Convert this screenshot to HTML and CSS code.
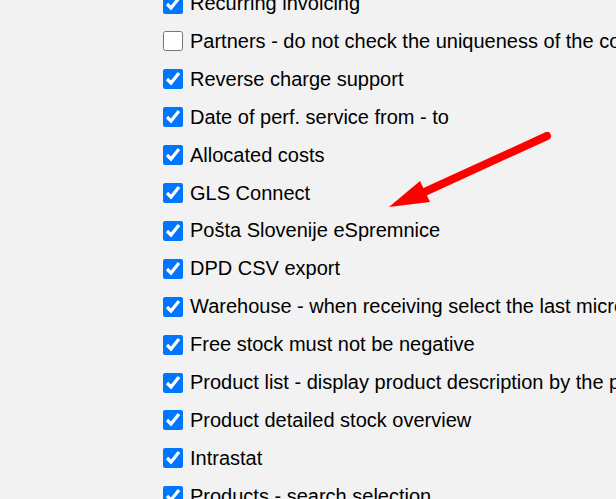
FILE: index.html
```html
<!DOCTYPE html>
<html>
<head>
<meta charset="utf-8">
<link rel="stylesheet" href="styles.css">
</head>
<body>
<div class="page">
  <ul class="options">
    <li class="opt"><input type="checkbox" checked><span>Recurring invoicing</span></li>
    <li class="opt"><input type="checkbox"><span>Partners - do not check the uniqueness of the company registration number</span></li>
    <li class="opt"><input type="checkbox" checked><span>Reverse charge support</span></li>
    <li class="opt"><input type="checkbox" checked><span>Date of perf. service from - to</span></li>
    <li class="opt"><input type="checkbox" checked><span>Allocated costs</span></li>
    <li class="opt"><input type="checkbox" checked><span>GLS Connect</span></li>
    <li class="opt"><input type="checkbox" checked><span>Pošta Slovenije eSpremnice</span></li>
    <li class="opt"><input type="checkbox" checked><span>DPD CSV export</span></li>
    <li class="opt"><input type="checkbox" checked><span>Warehouse - when receiving select the last micro location</span></li>
    <li class="opt"><input type="checkbox" checked><span>Free stock must not be negative</span></li>
    <li class="opt"><input type="checkbox" checked><span>Product list - display product description by the product name</span></li>
    <li class="opt"><input type="checkbox" checked><span>Product detailed stock overview</span></li>
    <li class="opt"><input type="checkbox" checked><span>Intrastat</span></li>
    <li class="opt"><input type="checkbox" checked><span>Products - search selection</span></li>
  </ul>
  <svg class="arrow" width="616" height="499" viewBox="0 0 616 499" aria-hidden="true">
    <line x1="547" y1="136" x2="418" y2="195" stroke="#ff0000" stroke-width="8" stroke-linecap="round"/>
    <polygon points="389,207 420,181 430,202" fill="#ff0000"/>
  </svg>
</div>
</body>
</html>
```

FILE: styles.css
```css
html, body {
  margin: 0;
  padding: 0;
  background: #f2f2f2;
}
body {
  width: 616px;
  height: 499px;
  overflow: hidden;
  font-family: "Liberation Sans", Arial, sans-serif;
}
.page {
  position: relative;
  width: 616px;
  height: 499px;
  overflow: hidden;
}
.options {
  list-style: none;
  margin: -8.5px 0 0 0;
  padding: 0 0 0 163px;
  display: flex;
  flex-direction: column;
  gap: 13.92px;
}
.opt {
  display: flex;
  align-items: center;
  gap: 7px;
  height: 24px;
  white-space: nowrap;
  font-size: 20px;
  color: #000;
}
.opt input {
  width: 20px;
  height: 20px;
  margin: 0;
  flex: none;
  accent-color: #0075ff;
}
.arrow {
  position: absolute;
  left: 0;
  top: 0;
  pointer-events: none;
}
```
